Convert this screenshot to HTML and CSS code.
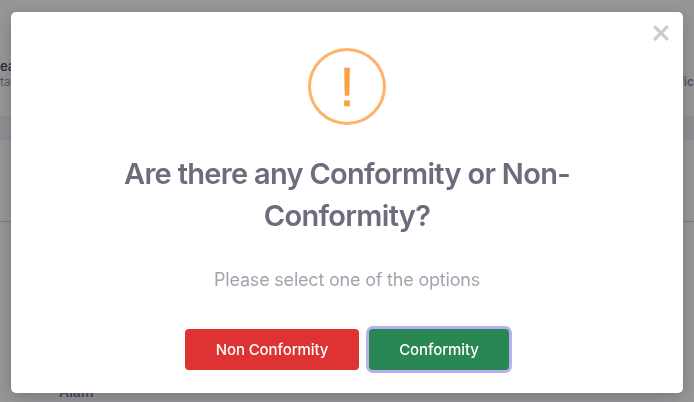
FILE: index.html
```html
<!DOCTYPE html>
<html lang="en">
  <head>
    <meta charset="utf-8">
    <title>Conformity</title>
    <link rel="stylesheet" href="styles.css">
  </head>
  <body>
    <div class="page">
      <div class="page-header">
        <div>
          <div class="lead">ead</div>
          <div class="sub">tatus</div>
        </div>
        <div class="office">Offic</div>
      </div>
      <div class="band"></div>
      <div class="strip"></div>
      <div class="tabs"></div>
      <div class="row">Alam</div>
    </div>

    <div class="backdrop">
      <div class="popup" role="dialog">
        <button class="close" aria-label="Close">
          <svg width="16" height="16" viewBox="0 0 16 16">
            <path d="M1.2 1.2L14.8 14.8M14.8 1.2L1.2 14.8" stroke="#ccc" stroke-width="3.2" fill="none" />
          </svg>
        </button>
        <div class="icon"><span>!</span></div>
        <h2 class="title">Are there any Conformity or Non-<br>Conformity?</h2>
        <div class="message">Please select one of the options</div>
        <div class="actions">
          <button class="btn btn-deny"><span>Non Conformity</span></button>
          <button class="btn btn-confirm"><span>Conformity</span></button>
        </div>
      </div>
    </div>
  </body>
</html>
```
FILE: styles.css
```css
* {
  box-sizing: border-box;
}

body {
  margin: 0;
  height: 402px;
  overflow: hidden;
  font-family: Inter, "Liberation Sans", sans-serif;
  background: #fbfbfb;
}

/* page under the dialog */
.page {
  height: 402px;
  overflow: hidden;
}

.page-header {
  display: flex;
  justify-content: space-between;
  height: 116px;
  padding-top: 58px;
}

.lead {
  font-size: 13px;
  line-height: 17px;
  font-weight: 600;
  color: #4b465c;
}

.sub {
  font-size: 12px;
  line-height: 13px;
  color: #97939f;
}

.office {
  padding-top: 15px;
  font-size: 12px;
  line-height: 17px;
  font-weight: 600;
  color: #8d899b;
}

.band {
  height: 17px;
  background: #f0f0f0;
}

.strip {
  height: 7px;
  background: #efeef7;
}

.tabs {
  height: 82px;
  border-bottom: 1px solid #cfced3;
}

.row {
  padding: 160px 0 0 59px;
  font-size: 14px;
  line-height: 20px;
  font-weight: 600;
  color: #6f6b7d;
}

/* dialog */
.backdrop {
  position: fixed;
  inset: 0;
  display: flex;
  align-items: flex-start;
  justify-content: center;
  padding-top: 12px;
  background: rgba(0, 0, 0, 0.4);
}

.popup {
  position: relative;
  width: 672px;
  height: 381px;
  padding-top: 36px;
  display: flex;
  flex-direction: column;
  align-items: center;
  background: #fff;
  border-radius: 5px;
  box-shadow: 0 4px 18px rgba(75, 70, 92, 0.4);
}

.close {
  position: absolute;
  top: 13px;
  right: 14px;
  padding: 0;
  border: 0;
  background: none;
}

.close svg {
  display: block;
}

.icon {
  display: flex;
  align-items: center;
  justify-content: center;
  width: 78px;
  height: 77px;
  border: 3px solid #ffb269;
  border-radius: 50%;
  color: #ff9f43;
  font-family: "Liberation Sans", sans-serif;
  font-size: 56px;
  line-height: 71px;
  -webkit-text-stroke: 0.3px #ff9f43;
}

.title {
  margin: 28px 0 0;
  font-size: 29px;
  line-height: 42px;
  font-weight: 600;
  text-align: center;
  color: #6f6b7d;
  letter-spacing: -0.7px;
}

.message {
  margin-top: 30px;
  font-size: 18px;
  line-height: 26px;
  color: #a5a3ae;
  letter-spacing: -0.2px;
}

.actions {
  display: flex;
  gap: 10px;
  margin-top: 36px;
}

.btn {
  height: 41px;
  padding: 0;
  border: 0;
  border-radius: 4px;
  color: #fff;
  font-family: inherit;
  font-size: 15px;
  font-weight: 500;
  letter-spacing: -0.1px;
}

.btn-deny {
  width: 174px;
  background: #dd3333;
}

.btn-confirm {
  width: 140px;
  background: #288752;
  box-shadow: 0 0 0 3px #b8b0ef;
}
```
